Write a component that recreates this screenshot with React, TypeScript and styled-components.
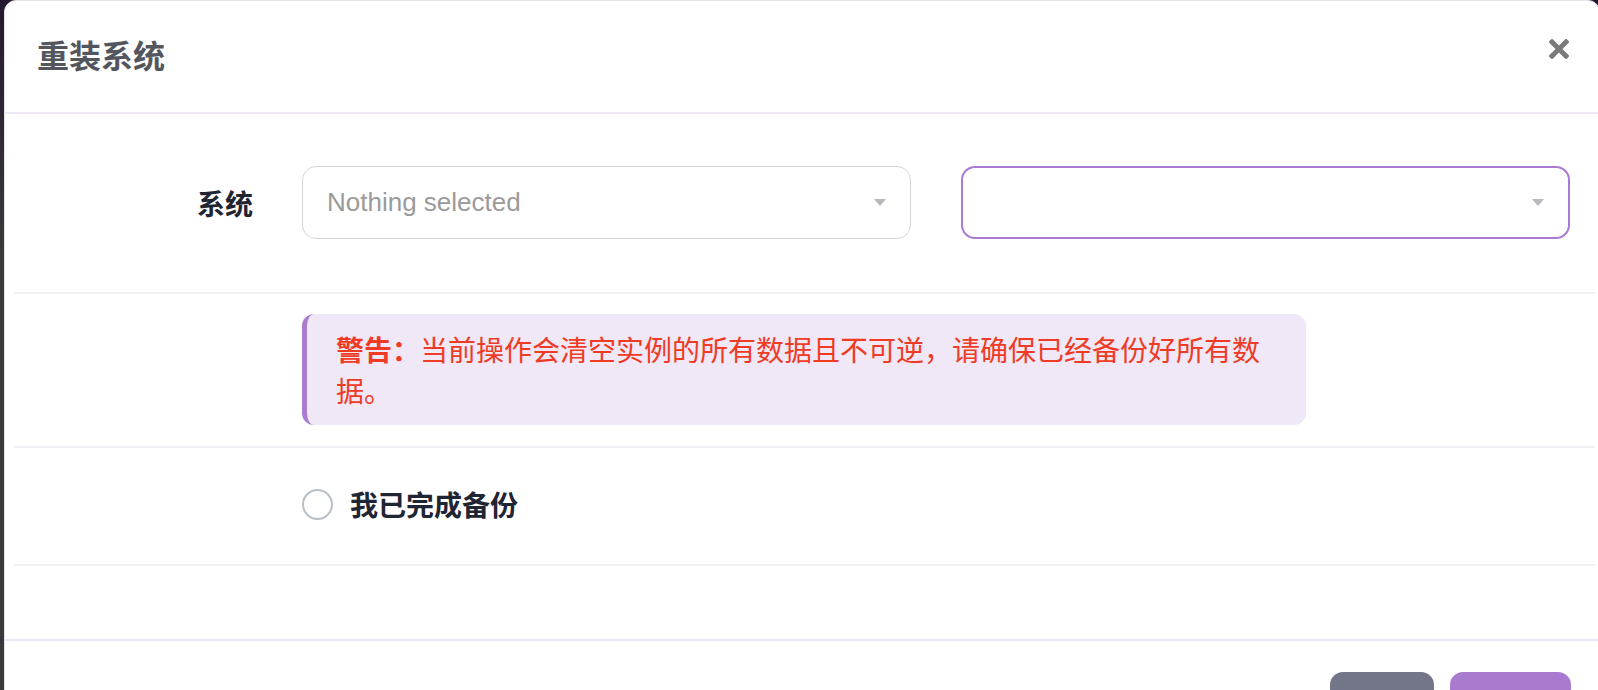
import React from "react";
import styled, { createGlobalStyle } from "styled-components";

const Global = createGlobalStyle`
  html, body { margin: 0; padding: 0; }
  body {
    width: 1598px;
    height: 690px;
    overflow: hidden;
    background: linear-gradient(180deg, #24182e 0px, #3a3a3a 260px, #3a3a3a 100%);
    font-family: "Noto Sans CJK SC", "Noto Sans", sans-serif;
  }
`;

const Backdrop = styled.div`
  padding-left: 4px;
  height: 690px;
  overflow: hidden;
`;

const Modal = styled.div`
  width: 1596px;
  background: #ffffff;
  border: 1px solid #e4e4e8;
  border-radius: 12px 12px 0 0;
  box-sizing: border-box;
`;

const Header = styled.div`
  height: 111px;
  display: flex;
  align-items: center;
  justify-content: space-between;
  padding: 0 30px 0 32px;
  border-bottom: 2px solid #efe8f7;
`;

const Title = styled.h4`
  margin: -6px 0 0;
  font-size: 32px;
  font-weight: 700;
  color: #53575d;
  line-height: 1;
`;

const CloseBtn = styled.button`
  width: 20px;
  height: 20px;
  padding: 0;
  border: 0;
  background: none;
  margin-top: -15px;
  display: flex;
  align-items: center;
  justify-content: center;
  cursor: pointer;
`;

const Body = styled.div`
  padding: 0 4px 73px 9px;
`;

const Row = styled.div<{ $pt: number; $pb: number }>`
  display: flex;
  align-items: center;
  padding: ${(p) => p.$pt}px 0 ${(p) => p.$pb}px;
  border-bottom: 2px solid #eff1f5;
`;

const LabelCol = styled.div`
  width: 288px;
  flex: none;
  box-sizing: border-box;
  padding-right: 49px;
  text-align: right;
  font-size: 28px;
  font-weight: 700;
  color: #1f2533;
`;

const Controls = styled.div`
  display: flex;
  gap: 50px;
`;

const Select = styled.div<{ $focus?: boolean }>`
  width: 609px;
  height: 73px;
  box-sizing: border-box;
  border: ${(p) => (p.$focus ? "2px solid #aa7ad2" : "1.5px solid #d2d5da")};
  border-radius: 14px;
  display: flex;
  align-items: center;
  justify-content: space-between;
  padding: 0 24px 0 24px;
  background: #fff;
`;

const Placeholder = styled.span`
  font-family: "Liberation Sans", Arial, sans-serif;
  font-size: 26px;
  color: #9a9a9a;
`;

const Caret = styled.span`
  width: 0;
  height: 0;
  border-left: 6px solid transparent;
  border-right: 6px solid transparent;
  border-top: 7px solid #b7b9bf;
  margin-left: auto;
`;

const Warning = styled.div`
  width: 1004px;
  box-sizing: border-box;
  padding: 15px 30px 14px 29px;
  background: #f0e7f7;
  border-left: 5px solid #a97bd1;
  border-radius: 12px;
  font-size: 28px;
  line-height: 41px;
  color: #ef3b24;
`;

const Strong = styled.strong`
  font-weight: 700;
`;

const RadioLabel = styled.label`
  display: flex;
  align-items: center;
  gap: 17px;
  height: 40px;
  font-size: 28px;
  font-weight: 700;
  color: #1f2533;
  cursor: pointer;
`;

const RadioCircle = styled.span`
  width: 31px;
  height: 31px;
  box-sizing: border-box;
  border: 2px solid #b9bfc7;
  border-radius: 50%;
  background: #fff;
  flex: none;
`;

const Footer = styled.div`
  border-top: 2px solid #ede6f6;
  padding: 31px 28px 0 0;
  display: flex;
  justify-content: flex-end;
  gap: 16px;
`;

const Button = styled.button<{ $primary?: boolean; $w: number }>`
  width: ${(p) => p.$w}px;
  height: 60px;
  border: 0;
  border-radius: 13px;
  background: ${(p) => (p.$primary ? "#a97bd0" : "#737589")};
  color: #fff;
`;

export default function App() {
  return (
    <>
      <Global />
      <Backdrop>
        <Modal>
          <Header>
            <Title>重装系统</Title>
            <CloseBtn aria-label="close">
              <svg width="20" height="20" viewBox="0 0 20 20">
                <path
                  d="M3 3 L17 17 M17 3 L3 17"
                  stroke="#7a7a7a"
                  strokeWidth="5"
                  strokeLinecap="square"
                />
              </svg>
            </CloseBtn>
          </Header>
          <Body>
            <Row $pt={52} $pb={53}>
              <LabelCol>系统</LabelCol>
              <Controls>
                <Select>
                  <Placeholder>Nothing selected</Placeholder>
                  <Caret />
                </Select>
                <Select $focus>
                  <Caret />
                </Select>
              </Controls>
            </Row>
            <Row $pt={20} $pb={21}>
              <LabelCol />
              <Warning>
                <Strong>警告：</Strong>
                当前操作会清空实例的所有数据且不可逆，请确保已经备份好所有数据。
              </Warning>
            </Row>
            <Row $pt={36} $pb={40}>
              <LabelCol />
              <RadioLabel>
                <RadioCircle />
                我已完成备份
              </RadioLabel>
            </Row>
          </Body>
          <Footer>
            <Button $w={104} aria-label="取消" />
            <Button $primary $w={121} aria-label="确定" />
          </Footer>
        </Modal>
      </Backdrop>
    </>
  );
}
